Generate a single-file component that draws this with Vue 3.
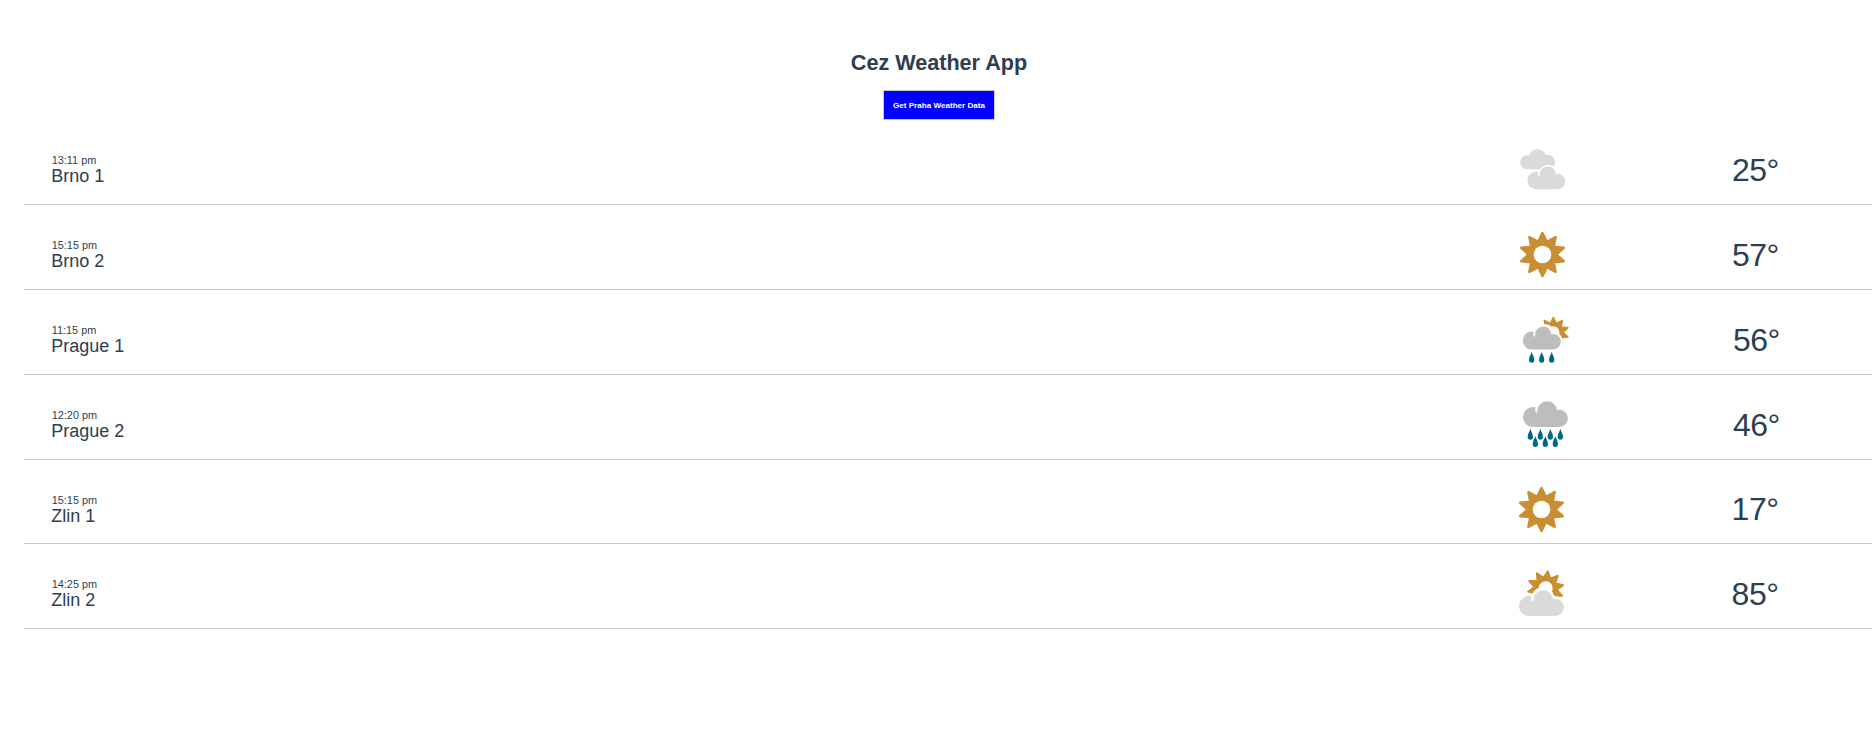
<script setup>
const groups = [
  { city: 'brno', rows: [
    { time: '13:11 pm', name: 'Brno 1', icon: 'clouds', temp: 25 },
    { time: '15:15 pm', name: 'Brno 2', icon: 'sun', temp: 57 },
  ] },
  { city: 'prague', rows: [
    { time: '11:15 pm', name: 'Prague 1', icon: 'sunrain', temp: 56 },
    { time: '12:20 pm', name: 'Prague 2', icon: 'rain', temp: 46 },
  ] },
  { city: 'zlin', rows: [
    { time: '15:15 pm', name: 'Zlin 1', icon: 'sun', temp: 17 },
    { time: '14:25 pm', name: 'Zlin 2', icon: 'partly', temp: 85 },
  ] },
]

// Ten-pointed sun outline around the origin; a stroke rounds the tips.
const sunPoints = Array.from({ length: 20 }, (_, i) => {
  const r = i % 2 ? 40 : 64.5
  const a = ((-90 + i * 18) * Math.PI) / 180
  return `${(r * 1.04 * Math.cos(a)).toFixed(2)},${(r * Math.sin(a)).toFixed(2)}`
}).join(' ')
</script>

<template>
  <main class="app">
    <svg class="defs" aria-hidden="true">
      <defs>
        <g id="w-sun">
          <polygon :points="sunPoints" fill="#c98e32" stroke="#c98e32" stroke-width="7.5" stroke-linejoin="round" />
          <circle r="26.5" fill="#fff" />
        </g>
        <path id="w-cloud" d="M84 96A30 30 0 1 1 93 37Q91 49 95 54Q98 54 99 47A29 27 0 0 1 157 45A26 26 0 1 1 163 96Z" />
        <path id="w-drop" d="M0 0C1 7 8 14 8 24A8 9 0 0 1 -8 24C-8 14 -1 7 0 0Z" fill="#006882" />
      </defs>
    </svg>
    <h1 class="title">Cez Weather App</h1>
    <button class="fetch">Get Praha Weather Data</button>
    <section class="list">
      <template v-for="g in groups" :key="g.city">
        <article v-for="r in g.rows" :key="r.name" class="row" :class="g.city">
          <div class="info">
            <div class="time">{{ r.time }}</div>
            <div class="name">{{ r.name }}</div>
          </div>
          <svg class="icon" viewBox="0 0 240 180">
            <template v-if="r.icon === 'clouds'">
              <path fill="#dadada" d="M66 88A21 21 0 1 1 73 47A25 23 0 0 1 122 45A22 22 0 1 1 130 88Z" />
              <circle cx="131" cy="107" r="32" fill="#fff" />
              <use href="#w-cloud" fill="#dadada" transform="translate(20.5 62.3) scale(.843 .893)" />
            </template>
            <use v-else-if="r.icon === 'sun'" href="#w-sun" x="112.5" y="88.5" />
            <template v-else-if="r.icon === 'sunrain'">
              <use href="#w-sun" transform="translate(136 67) scale(.68)" />
              <path fill="#fff" d="M38 124V64H77A32 32 0 0 1 138 64A31 31 0 0 1 164 98V124Z" />
              <use href="#w-cloud" fill="#bdbdbd" transform="translate(-2 32.5) scale(.843 .893)" />
              <use v-for="x in [71, 101, 131]" :key="x" href="#w-drop" :x="x" y="125" />
            </template>
            <template v-else-if="r.icon === 'rain'">
              <use href="#w-cloud" fill="#bdbdbd" x="-10.5" />
              <use v-for="x in [67, 97, 127, 157]" :key="x" href="#w-drop" :x="x" y="101" />
              <use v-for="x in [82, 112, 142]" :key="x" href="#w-drop" :x="x" y="123" />
            </template>
            <template v-else>
              <use href="#w-sun" transform="translate(125 73) rotate(7) scale(.8)" />
              <path fill="#fff" d="M45 156V89H85A36 36 0 0 1 151 95Q176 99 187 122V156Z" />
              <use href="#w-cloud" fill="#dadada" x="-10.5" y="60" />
            </template>
          </svg>
          <div class="temp">{{ r.temp }}°</div>
        </article>
      </template>
    </section>
  </main>
</template>

<style scoped>
.app {
  box-sizing: border-box;
  height: 729px;
  padding: 50px 3px 0 24px;
  display: flex;
  flex-direction: column;
  background: #fff;
  color: #2c3e50;
  font-family: "Liberation Sans", Arial, sans-serif;
  overflow: hidden;
}
.defs {
  position: absolute;
  width: 0;
  height: 0;
}
.title {
  margin: 0 18px 0 0;
  height: 40px;
  line-height: 25px;
  font-size: 21.6px;
  font-weight: 700;
  text-align: center;
}
.fetch {
  width: 112px;
  height: 30px;
  margin: 0 0 0 859px;
  padding: 0;
  border: 1px solid #ccc;
  background: #00f;
  color: #fff;
  font: 700 8.1px "Liberation Sans", Arial, sans-serif;
  white-space: nowrap;
}
.list {
  margin-top: 0.4px;
}
.row {
  box-sizing: border-box;
  height: 84.8px;
  display: grid;
  grid-template-columns: 1481px 227px 1fr;
  align-items: start;
  border-bottom: 1px solid #c8c8c8;
}
.row.prague {
  grid-template-columns: 1484px 225px 1fr;
}
.row.zlin {
  grid-template-columns: 1480px 227.6px 1fr;
}
.info {
  padding: 33px 0 0 27.3px;
}
.time {
  padding-left: 0.4px;
  font-size: 10.9px;
  line-height: 14px;
}
.name {
  font-size: 18px;
  line-height: 18px;
}
.icon {
  display: block;
  width: 80px;
  height: 60px;
  margin-top: 20px;
}
.temp {
  padding-top: 31.8px;
  font-size: 32px;
  line-height: 36px;
  letter-spacing: -0.5px;
}
</style>

<style>
body {
  margin: 0;
  background: #fff;
}
</style>
